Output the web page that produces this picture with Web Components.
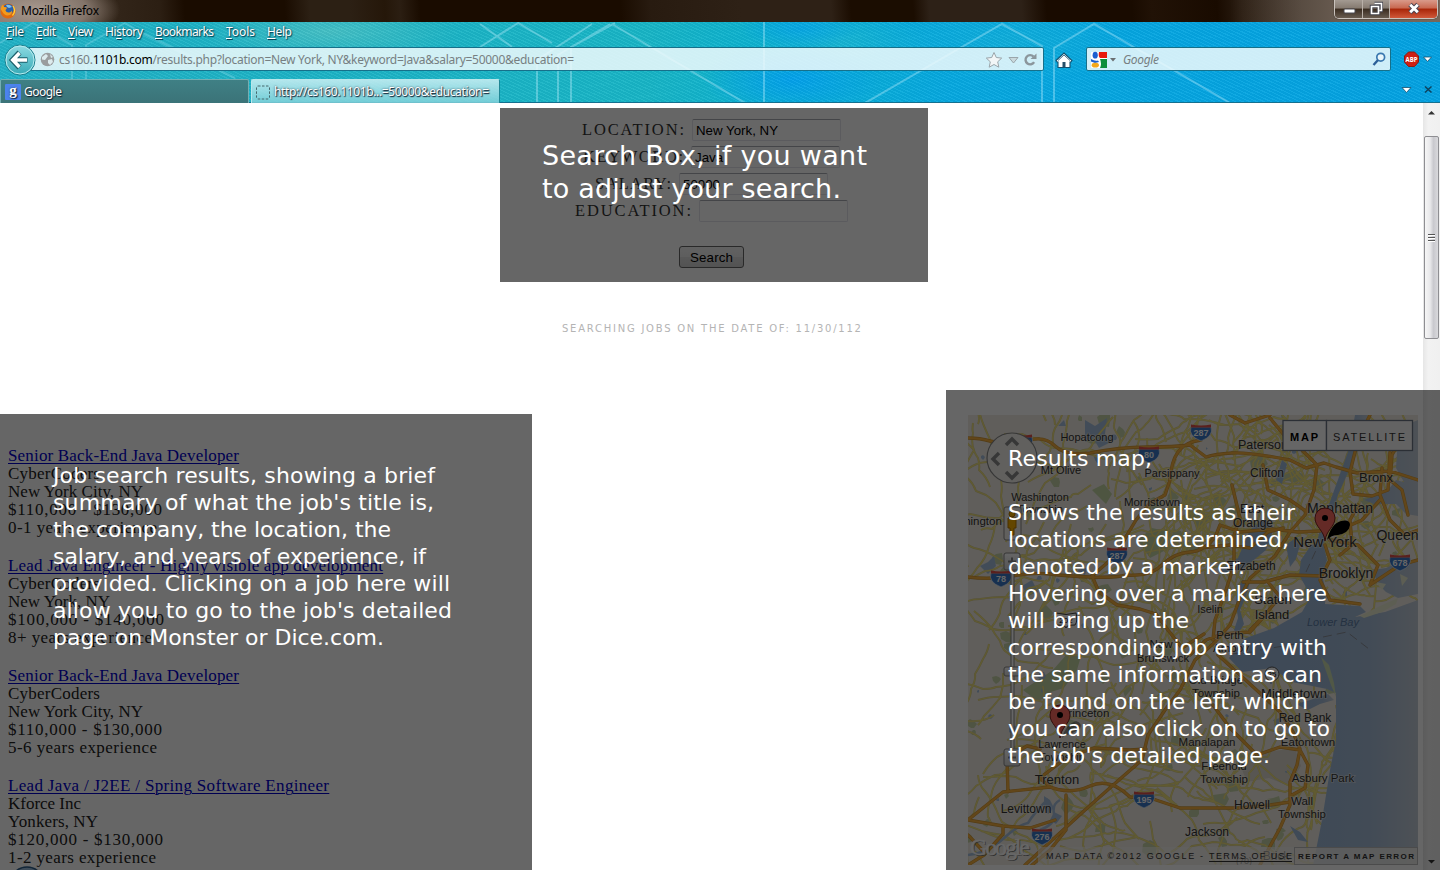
<!DOCTYPE html>
<html lang="en">
<head>
<meta charset="utf-8">
<title>Mozilla Firefox</title>
<style>
html,body{margin:0;height:100%;overflow:hidden;background:#fff}
</style>
</head>
<body>
<browser-window>
  <title-bar slot="title"></title-bar>
  <tool-area slot="tools"></tool-area>
  <results-page slot="page"></results-page>
  <scroll-bar slot="scroll"></scroll-bar>
  <note-callout slot="notes" style="--x:500px;--y:108px;--w:428px;--h:174px;--px:42px;--py:31px;--fs:27px;--lh:33px">
    <fit-text w="325">Search Box, if you want</fit-text>
    <fit-text w="299">to adjust your search.</fit-text>
  </note-callout>
  <note-callout slot="notes" style="--x:0px;--y:414px;--w:532px;--h:456px;--px:53px;--py:48px;--fs:22px;--lh:27px">
    <fit-text w="382">Job search results, showing a brief</fit-text>
    <fit-text w="381">summary of what the job's title is,</fit-text>
    <fit-text w="338">the company, the location, the</fit-text>
    <fit-text w="373">salary, and years of experience, if</fit-text>
    <fit-text w="397">provided. Clicking on a job here will</fit-text>
    <fit-text w="399">allow you to go to the job's detailed</fit-text>
    <fit-text w="331">page on Monster or Dice.com.</fit-text>
  </note-callout>
  <note-callout slot="notes" style="--x:946px;--y:390px;--w:494px;--h:480px;--px:62px;--py:55px;--fs:22px;--lh:27px">
    <fit-text w="144">Results map,</fit-text>
    <br-line></br-line>
    <fit-text w="287">Shows the results as their</fit-text>
    <fit-text w="281">locations are determined,</fit-text>
    <fit-text w="237">denoted by a marker.</fit-text>
    <fit-text w="319">Hovering over a marker here</fit-text>
    <fit-text w="181">will bring up the</fit-text>
    <fit-text w="319">corresponding job entry with</fit-text>
    <fit-text w="314">the same information as can</fit-text>
    <fit-text w="300">be found on the left, which</fit-text>
    <fit-text w="322">you can also click on to go to</fit-text>
    <fit-text w="262">the job's detailed page.</fit-text>
  </note-callout>
</browser-window>

<script>
const define = (name, html, setup) => customElements.define(name, class extends HTMLElement {
  constructor() {
    super();
    this.attachShadow({mode: 'open'}).innerHTML = html;
    if (setup) setup(this.shadowRoot, this);
  }
});

define('browser-window', `
<style>
:host{display:flex;flex-direction:column;position:relative;width:1440px;height:870px;overflow:hidden;background:#fff}
.body{display:flex;flex:1;min-height:0}
</style>
<slot name="title"></slot><slot name="tools"></slot>
<div class="body"><slot name="page"></slot><slot name="scroll"></slot></div>
<slot name="notes"></slot>`);

define('note-callout', `
<style>
:host{position:absolute;left:var(--x);top:var(--y);width:var(--w);height:var(--h);box-sizing:border-box;
 padding:var(--py) 0 0 var(--px);background:rgba(0,0,0,.6);color:#fff;display:flex;flex-direction:column;align-items:flex-start;
 font:var(--fs)/var(--lh) "DejaVu Sans",Verdana,sans-serif}
</style><slot></slot>`);
define('br-line', `<style>:host{display:block;height:27px;flex:none}</style>`);

define('title-bar', `
<style>
:host{display:flex;height:22px;flex:none;justify-content:space-between;align-items:flex-start;overflow:hidden;
 background:radial-gradient(ellipse 82px 34px at 38px 10px,rgba(190,175,165,.8) 0,rgba(165,150,140,.68) 60%,rgba(120,105,90,0) 100%),
 linear-gradient(90deg,transparent 1230px,rgba(150,135,122,.5) 1340px,rgba(160,140,125,.6) 1440px),
 linear-gradient(86deg,#5a4a3e 0,#33261a 110px,#2c1f13 160px,#1a0c00 185px,#1a0c00 285px,#2c2014 310px,#2c2014 350px,#251709 385px,#2b1e12 400px,#1a0c00 420px,#1a0c00 620px,#281b10 650px,#2e2116 740px,#2e2116 830px,#1b0d01 850px,#1b0d01 912px,#2d2117 928px,#2d2117 1020px,#190b00 1045px,#190b00 1130px,#211206 1150px,#190b00 1215px,#2a1d12 1240px,#3b3027 1300px)}
.t{display:flex;align-items:center;gap:5px;height:22px;font:12px/20px "Noto Sans","Open Sans",sans-serif;color:#000}
svg{flex:none}
.b{display:flex;width:104px;height:19px;margin:0 2px 0 0;box-sizing:border-box;border:1px solid #c9c2bc;border-top:0;border-radius:0 0 5px 5px;overflow:hidden;box-shadow:0 0 1px #000}
.b div{display:flex;align-items:center;justify-content:center;background:linear-gradient(#a39a92,#857a70 45%,#3a2c20 50%,#695c50);border-right:1px solid #b9b0a8;width:28px;box-sizing:border-box}
.b div:nth-of-type(2){width:27px}
.b div:last-child{flex:1;border:0;background:linear-gradient(#d99a8a,#c8674f 45%,#a82508 50%,#d0583a)}
</style>
<div class="t"><svg width="16" height="18" viewBox="0 0 16 18"><circle cx="8" cy="9" r="7.600" fill="#e06a10"/><circle cx="8.300" cy="7.300" r="5.400" fill="#2b5fa8"/><path d="M6 3q4-1 6 2l-3 1-2-1z" fill="#7fc0ea"/><path d="M.6 7Q1.500 3.600 3 2.600L4 5q2-.4 3 1L5.400 8.300q1 2.700 4 2.200 2-.5 2.500-2 .6 3-2 4.500Q5 14.500 2.500 10z" fill="#f39a1c"/><path d="M13 4q3.400 5-.5 9.500" fill="none" stroke="#ffd23c" stroke-width="1.300"/></svg><fit-text w="78">Mozilla Firefox</fit-text></div>
<div class="b"><div><svg width="14" height="16"><rect x="2" y="8" width="11" height="4" rx="1" fill="#fff" stroke="#4a4a52"/></svg></div>
<div><svg width="14" height="16"><path d="M5.500 2.500h7v7h-2M2.500 5.500h7v7h-7z" fill="none" stroke="#44444c" stroke-width="3.500"/><path d="M5.500 2.500h7v7h-2M2.500 5.500h7v7h-7z" fill="none" stroke="#fff" stroke-width="1.600"/></svg></div>
<div><svg width="16" height="16"><path d="M4 3.500l8 8M12 3.500l-8 8" stroke="#4c4450" stroke-width="4.800"/><path d="M4.200 3.700l7.600 7.600M11.800 3.700l-7.600 7.600" stroke="#fff" stroke-width="2.800"/></svg></div></div>`);

define('tool-area', `
<style>
:host{display:flex;flex-direction:column;height:81px;flex:none;box-sizing:border-box;position:relative;border-bottom:1px solid #14708f;
 background:repeating-linear-gradient(25deg,rgba(255,255,255,.05) 0 1px,rgba(0,40,80,.05) 1px 3px),
 radial-gradient(ellipse 90px 36px at 793px 58px,rgba(0,155,245,.7),transparent),
 radial-gradient(ellipse 60px 22px at 800px 6px,rgba(0,160,240,.6),transparent),
 radial-gradient(ellipse 130px 30px at 330px 10px,rgba(110,205,195,.5),transparent),
 radial-gradient(ellipse 90px 30px at 840px 20px,rgba(40,190,205,.45),transparent),
 radial-gradient(ellipse 120px 40px at 1010px 20px,rgba(40,190,205,.3),transparent),
 linear-gradient(90deg,#22b3c6 0,#18b6c6 45%,#0bb2d2 54%,#06a9e0 66%,#04a3e3 100%);
 font:12px/20px "Noto Sans","Open Sans",sans-serif}
.bg{position:absolute;left:0;top:0}
menu-row,nav-row,tab-row{position:relative}
</style>
<svg class="bg" width="1440" height="80" viewBox="0 22 1440 80" fill="none" stroke="#c4f2ff" stroke-width="2">
<path stroke-opacity=".22" d="M0 43L33 23l39 22v58M86 103V45l39-22 15 9 95 46"/><path stroke-opacity=".36" d="M480 24l32 23M480 47l38-24 34 20M537 103V60l55-36M558 103V55l52-31M571 103V47l44-24M612 24l133 79M764 22v81M865 103l95-55 42-24 40 22v57M1054 103V48l40-24 136 79"/></svg>
<menu-row></menu-row><nav-row></nav-row><tab-row></tab-row>`);

define('menu-row', `
<style>
:host{display:flex;height:20px;flex:none;padding-left:6px;color:#fff;text-shadow:1px 1px 1px #045,0 0 2px #256}
span{flex:none;width:var(--w)}
u{text-underline-offset:2px}
</style>
<span style="--w:30px"><fit-text w="18"><u>F</u>ile</fit-text></span><span style="--w:32px"><fit-text w="20"><u>E</u>dit</fit-text></span><span style="--w:37px"><fit-text w="25"><u>V</u>iew</fit-text></span><span style="--w:50px"><fit-text w="38">Hi<u>s</u>tory</fit-text></span><span style="--w:71px"><fit-text w="59"><u>B</u>ookmarks</fit-text></span><span style="--w:41px"><fit-text w="29"><u>T</u>ools</fit-text></span><span style="--w:30px"><fit-text w="25"><u>H</u>elp</fit-text></span>`);

define('nav-row', `
<style>
:host{display:flex;height:35px;flex:none;align-items:center;padding-left:4px;box-sizing:border-box}
.back{z-index:1;flex:none;margin-right:-26px}
.f{display:flex;flex:none;align-items:center;height:24px;box-sizing:border-box;border:1px solid #16708a;border-radius:2px;background:rgba(240,250,253,.86);color:#777f82;margin-bottom:1px;padding-top:1px}
.f svg{flex:none}
.u{width:1030px;padding-left:25px;margin-left:4px;gap:4px}
b{font-weight:400;color:#000}
.ic{margin-left:auto;margin-right:4px}
.home{flex:none;margin:0 13px 0 11px}
.s{width:305px;padding-left:3px;font-style:italic}
.s .n{margin-left:6px}
.abp{flex:none;margin:0 0 0 12px}
</style>
<svg class="back" width="32" height="32" viewBox="0 0 32 32"><defs><linearGradient id="a" x2="0" y2="1"><stop stop-color="#8fdbe3"/><stop offset="1" stop-color="#35a9b6"/></linearGradient></defs><circle cx="16" cy="16" r="15" fill="url(#a)" stroke="#1d7e8c"/><circle cx="16" cy="16" r="14" fill="none" stroke="#b8ecf0"/><path d="M15.500 8.500l-7 7.500 7 7.500M9 16h14.500" fill="none" stroke="#1b5e6a" stroke-width="5.500"/><path d="M15.500 9L8.800 16l6.700 7M9.500 16h13.500" fill="none" stroke="#fff" stroke-width="3.600"/></svg>
<div class="f u"><svg width="15" height="15" viewBox="0 0 15 15"><circle cx="7.500" cy="7.500" r="6.800" fill="#9a9d9e"/><path d="M2 5l4-3 2 2-3 4-3-.5zM8 8l4-1 1 3-3 3-2-2zM10 2l3 3-2 1z" fill="#dcebed"/></svg>
<fit-text w="515">cs160.<b>1101b.com</b>/results.php?location=New York, NY&amp;keyword=Java&amp;salary=50000&amp;education=</fit-text>
<svg class="ic" width="54" height="18" viewBox="0 0 54 18"><path d="M9 1.500l2.300 5 5.400.6-4 3.700 1.100 5.400L9 13.500l-4.800 2.700 1.100-5.400-4-3.700 5.400-.6z" fill="#f2f6f7" stroke="#9aa5aa"/><path d="M24 6.500h9L28.500 12z" fill="#c9d9dd" stroke="#9aa5aa"/><path d="M48.500 5.600a4.600 4.600 0 1 0 .6 5.500" fill="none" stroke="#8b969c" stroke-width="2.400"/><path d="M45.500 8h6V2.500z" fill="#8b969c"/></svg></div>
<svg class="home" width="18" height="18" viewBox="0 0 18 18"><path d="M1 9.500L9 2l8 7.500-1.200 1.500H15v5.500H3V11h-.8z" fill="#fff" stroke="#14506e" stroke-width="1.100"/><path d="M3 9.500L9 4l6 5.500" fill="none" stroke="#14506e" stroke-width=".8"/><path d="M7.500 16v-5h3v5z" fill="#27506a"/></svg>
<div class="f s"><svg width="18" height="17" viewBox="0 0 18 17"><rect x="1" y="1" width="16" height="16" rx="1" fill="#fff"/><path d="M9 1h8v6H10q-2-2-1-6z" fill="#e8190c"/><path d="M10 8h7v9h-7q2-4 0-9z" fill="#0c8f3c"/><ellipse cx="5.200" cy="4.200" rx="2.600" ry="3.400" fill="#1a5fd0"/><path d="M1 8q4 2.500 7 1.500l1 1.500-4 1-4-1.500z" fill="#1a5fd0"/><ellipse cx="5.300" cy="14.200" rx="3.600" ry="2.400" fill="#f3a81c"/></svg>
<svg width="9" height="6"><path d="M2 1h6L5 4.500z" fill="#6a6f72"/></svg><span class="n"><fit-text w="36">Google</fit-text></span>
<svg style="margin-left:auto;margin-right:4px" width="14" height="15" viewBox="0 0 14 15"><circle cx="8.700" cy="5.200" r="3.900" fill="#e8f6fb" stroke="#3a78b0" stroke-width="1.700"/><path d="M6 8l-4.500 5" stroke="#2d5f98" stroke-width="2.400"/></svg></div>
<svg class="abp" width="30" height="17" viewBox="0 0 30 17"><path d="M5.500 1h6l4 4v6l-4 4.500h-6L1.500 11V5z" fill="#cf1f14" stroke="#8d1a12"/><text x="8.500" y="11" font-family="Open Sans,sans-serif" font-weight="700" font-size="7" textLength="12" lengthAdjust="spacingAndGlyphs" text-anchor="middle" fill="#fff">ABP</text><path d="M20.500 6h8l-4 4.500z" fill="#fff" stroke="#145070" stroke-width=".8"/></svg>`);

define('tab-row', `
<style>
:host{display:flex;height:24px;flex:none;margin-top:2px;align-items:stretch;color:#fff;gap:2px}
div{box-sizing:border-box;display:flex;align-items:center;padding:1px 0 0 5px;border:1px solid #3f7f86;border-bottom:0;border-radius:2px 2px 0 0;line-height:20px;text-shadow:1px 1px 1px #123,0 0 2px #345}
.a{width:249px;padding-left:4px;background:linear-gradient(#3f8085,#3b7378);border-color:#75aeb2;gap:3px}
.b{width:249px;padding-left:4px;background:linear-gradient(rgba(205,240,244,.85),rgba(130,210,218,.82));border-color:#b9e6ea #1f8795 #fff #b9e6ea;gap:4px}
.e{border:0;padding:0;margin-left:auto;margin-right:7px;gap:12px;margin-top:-3px}
</style>
<div class="a"><svg width="16" height="16"><rect width="16" height="16" rx="1" fill="#4b83ee"/><text x="8" y="11" text-anchor="middle" font-family="Liberation Serif,serif" font-weight="700" font-size="15" fill="#fff">g</text></svg><fit-text w="38">Google</fit-text></div>
<div class="b"><svg width="14" height="15"><rect x=".5" y="1" width="13" height="13" rx="1.500" fill="none" stroke="#46686c" stroke-dasharray="2.500 1.500"/></svg><fit-text w="215">http://cs160.1101b...=50000&amp;education=</fit-text></div>
<div class="e"><svg width="11" height="8"><path d="M1 1.500h9L5.500 6.500z" fill="#fff" stroke="#145070" stroke-width=".8"/></svg><svg width="9" height="9"><path d="M1 1.500l6.500 6M7.500 1.500l-6.500 6" stroke="#0e4460" stroke-width="1.600"/></svg></div>`);

define('results-page', `
<style>
:host{display:flex;flex-direction:column;width:1423px;height:767px;overflow:hidden;background:#fff}
p{margin:0;height:12px;display:flex;justify-content:center;padding:51px 0 80px;font:10px/12px "DejaVu Sans",Verdana,sans-serif;color:#b4b4b4}
search-form{height:169px}
.r{display:flex;justify-content:space-between;padding:0 5px 0 8px}
</style>
<search-form></search-form>
<p><fit-text w="299">SEARCHING JOBS ON THE DATE OF: 11/30/112</fit-text></p>
<div class="r"><job-list></job-list><results-map></results-map></div>`);

define('search-form', `
<style>
:host{display:flex;flex-direction:column;align-items:center;flex:none;padding-top:16px;box-sizing:border-box;font:16.500px/22px "Liberation Serif",Georgia,serif;color:#333}
.r{display:flex;height:22px;margin-bottom:5px;color:#333}
.r span{display:block;width:var(--l);white-space:nowrap}
.r div{width:149px;height:22px;box-sizing:border-box;border:1px solid #e3e3ec;border-top-color:#abadb3;border-radius:2px;padding-left:3px;font:13.300px/21px "Liberation Sans",Arial,sans-serif;color:#000}
button{margin-top:19px;width:65px;height:22px;box-sizing:border-box;border:1px solid #666;border-radius:3px;background:linear-gradient(#f2f2f2,#ebebeb 49%,#ddd 50%,#cfcfcf);font:13.300px/20px "Liberation Sans",Arial,sans-serif;padding:1px 0 0;color:#000}
</style>
<div class="r"><span style="--l:110px"><fit-text w="102">LOCATION:</fit-text></span><div>New York, NY</div></div>
<div class="r"><span style="--l:108px"><fit-text w="100">KEYWORD:</fit-text></span><div>Java</div></div>
<div class="r"><span style="--l:84px"><fit-text w="76">SALARY:</fit-text></span><div>50000</div></div>
<div class="r"><span style="--l:124px"><fit-text w="116">EDUCATION:</fit-text></span><div></div></div>
<button><fit-text w="43">Search</fit-text></button>`);

define('job-list', `
<style>
:host{display:block;padding-top:32px;font:17px/18px "Liberation Serif",Georgia,serif;color:#222}
ul{list-style:none;margin:0 0 20px;padding:0}
li{height:18px;white-space:nowrap}
li:first-child{color:#00c}
li:first-child fit-text{text-decoration:underline;text-decoration-thickness:1px;text-underline-offset:2px}
svg{display:block;margin:-21px 0 0 2px}
</style><main></main><svg width="36" height="36"><circle cx="17" cy="18" r="17" fill="#9fc0e0" stroke="#30608c" stroke-width="1.500"/></svg>`, root => {
  const jobs = [
    [['Senior Back-End Java Developer',231],['CyberCoders',92],['New York City, NY',135],['$110,000 - $130,000',154],['0-1 years experience',149]],
    [['Lead Java Engineer - Highly visible app development',375],['CyberCoders',92],['New York, NY',102],['$100,000 - $140,000',156],['8+ years experience',144]],
    [['Senior Back-End Java Developer',231],['CyberCoders',92],['New York City, NY',135],['$110,000 - $130,000',154],['5-6 years experience',149]],
    [['Lead Java / J2EE / Spring Software Engineer',321],['Kforce Inc',73],['Yonkers, NY',90],['$120,000 - $130,000',155],['1-2 years experience',148]]];
  root.querySelector('main').innerHTML = jobs.map(j => '<ul>' + j.map(([t, w]) => `<li><fit-text w="${w}">${t}</fit-text></li>`).join('') + '</ul>').join('');
});

define('results-map', `
<style>
:host{display:block;width:450px;height:450px;flex:none}
svg{display:block}
text{font-family:"Liberation Sans",Arial,sans-serif}
</style>
<svg width="450" height="450" viewBox="968 415 450 450">
<defs><linearGradient id="sea"><stop stop-color="#9cb8da"/><stop offset=".55" stop-color="#a0bad8"/><stop offset=".75" stop-color="#a6bcd6"/><stop offset="1" stop-color="#c2ccd8"/></linearGradient>
<linearGradient id="ctl" x2="0" y2="1"><stop stop-color="#fff"/><stop offset="1" stop-color="#d4d4d4"/></linearGradient>
<g id="pin"><path d="M1325 541c-1-11-10-14-10-23a10 10 0 0 1 20 0c0 9-9 12-10 23z" fill="#fa6a60" stroke="#7c201c"/><circle cx="1325" cy="518" r="3" fill="#000"/></g></defs>
<rect x="968" y="415" width="450" height="450" fill="#f1ece3"/>
<g id="green" fill="#c6d3a8"></g>
<g fill="#c2d4a4"><path d="M1023 690l30-20 14-16 14 2-4 14-13 18-20 6-8 6zM1092 490l12-6 8 10-6 10zM1138 540l14-12 18 4-4 18-16 8z"/></g>
<path d="M1240 765l20-12 35-5 6 18-12 20-20-8-22 4z" fill="#ddd8cd"/>
<g id="lakes" fill="#a5bfdd"></g>
<g id="minor" fill="none" stroke-linejoin="round"></g>
<g fill="url(#sea)">
<path d="M1355 415h13l-10 35-20 45-8 30-6 18-8 2 6-22 9-24 18-50z"/>
<path d="M1311 545l12-3 4 18-5 15 4 17-1 12 35 2 6 6-11 5 30-5 33-12v265h-105l9-45 8-50 6-30v-47l-9-4-5-1-30-6-20-14-30 4-13-14 17-20 28-10 28-16 9-16-12-21 2-15z"/>
<path d="M1372 570l14-2 12-6 20-2v34l-20 4-12-6-8-8zM1388 490l8-10 22 6v30l-12-2-10-10-22 0-10-4zM1398 436l10-12 10-4v70l-14-8-8-14zM1250 530l14-12 10 10-8 22-22 18-20 6-6-4 20-12zM1286 545l8-6 6 6-4 14-6 8zM1238 590l4-10 8 2-4 14-6 14 4 14-6 10-4-4 4-12-2-14zM1276 480l6-20 5 4-5 20z"/>
<path d="M1296 704l14-4 18-6 6 6-14 4-12 6zM1290 826l10 6 8 10-10-2z"/></g>
<path d="M1321 657l8 8 5 18 2 14-5-12z" fill="#cbdcae"/>
<path d="M1360 616l20-10 18-8-2 6-14 8-18 6zM1376 582l10 2-4 6zM1400 574l8 4-6 8z" fill="#e8ecd0"/>
<path d="M968 855q20-2 35-16t25-16q6-10 20-24M1060 800q-8 4-6 14t-14 16" fill="none" stroke="#a5bfdd" stroke-width="2.500"/>
<g id="roads" fill="none" stroke-linecap="round" stroke-linejoin="round"></g>
<path d="M1230 654l22-2M1260 650l35-6M1323 637l24-5 22 17M1306 572l12-26" fill="none" stroke="#8a8f98" stroke-dasharray="9 5"/>
<g id="shields"></g><g id="labels"></g>
<g><path d="M1327 540q4-16 14-19 9-2 9 4-1 8-12 10-7 0-11 5z" fill="#000"/><path d="M1062 738q4-14 14-17 7 2 4 8-8 5-16 7z" fill="#333" opacity=".5"/>
<use href="#pin"/><use href="#pin" x="-265" y="197"/></g>
<g stroke="#888"><circle cx="1012" cy="458" r="25" fill="#f2f0ec" stroke-width="1.200"/>
<path d="M1006 445l6-6 6 6M1006 472l6 6 6-6M999 453l-6 6 6 6" fill="none" stroke="#8b8b8b" stroke-width="3.500"/>
<rect x="1004" y="507" width="17" height="33" rx="2" fill="#f2f0ec"/><path d="M1008 518h8v10h-2v7h-4v-7h-2z" fill="#f7b000" stroke="#b67900"/><circle cx="1012" cy="514" r="3" fill="#f7b000" stroke="#b67900"/>
<rect x="1011" y="569" width="3" height="182" fill="#fff"/><g fill="url(#ctl)"><rect x="1004" y="553" width="16" height="17" rx="2"/><rect x="1004" y="749" width="16" height="17" rx="2"/><rect x="1004" y="667" width="16" height="9" rx="2"/></g><path d="M1008 561.500h8M1012 557.500v8M1008 757.500h8" stroke="#888" stroke-width="2"/></g>
<text x="971" y="856" style="font-family:'Liberation Serif',serif" font-size="24" textLength="60" fill="#777">Google</text>
<text x="970" y="855" style="font-family:'Liberation Serif',serif" font-size="24" textLength="60" fill="#fff" stroke="#fff" stroke-width=".5" aria-hidden="true">Google</text>
<rect x="1038" y="847" width="256" height="18" fill="#f5f3ee" opacity=".6"/>
<g fill="#333" font-size="9"><text x="1046" y="859" textLength="157">MAP DATA ©2012 GOOGLE -</text><text x="1209" y="859" textLength="83">TERMS OF USE</text></g><path d="M1209 861.500h83" stroke="#333"/>
<rect x="1294.500" y="847.500" width="123" height="17" fill="#f5f3ee" fill-opacity=".8" stroke="#bbb"/><text x="1298" y="859" font-size="8" font-weight="700" textLength="116" fill="#333">REPORT A MAP ERROR</text>
<g stroke="#6d7685" stroke-width="1.300" fill="#fff"><rect x="1283" y="420.500" width="43.500" height="30"/><rect x="1326.500" y="420.500" width="86" height="30" fill="#f8f8f8"/></g>
<text x="1290" y="441" font-size="11" font-weight="700" textLength="28">MAP</text><text x="1333" y="441" font-size="11" textLength="72" fill="#333">SATELLITE</text>
</svg>`, root => {
  let s = 71;
  const rnd = () => (s = (s * 16807) % 2147483647) / 2147483647;
  const $ = id => root.getElementById(id);
  let minor = '';
  for (let i = 0; i < 350; i++) {
    let x, y;
    if (i < 210) { x = 968 + rnd() * 370; y = 415 + rnd() * 450; } else { x = 1170 + rnd() * 240; y = 415 + rnd() * 190; }
    let a = rnd() * 6.28, d = `M${x | 0} ${y | 0}`;
    const n = 3 + rnd() * 5;
    for (let k = 0; k < n; k++) {
      a += (rnd() - .5) * 1.1;
      const l = 8 + rnd() * 17, px = x, py = y;
      x += Math.cos(a) * l; y += Math.sin(a) * l;
      d += `Q${(px + x) / 2 + rnd() * 6 - 3 | 0} ${(py + y) / 2 + rnd() * 6 - 3 | 0} ${x | 0} ${y | 0}`;
    }
    minor += d;
  }
  $('minor').innerHTML = `<path d="${minor}" stroke="#d6cb94" stroke-width="2"/><path d="${minor}" stroke="#f2e47a" stroke-width="1.200"/>`;
  const blob = (n, r) => {
    let o = '';
    for (let i = 0; i < n; i++) {
      const x = 968 + rnd() * 440, y = 415 + rnd() * 440, q = r * (.4 + rnd());
      o += 'M' + [0, 1, 2, 3, 4, 5, 6].map(k => { const t = k * .9, v = q * (.5 + rnd() * .8); return (x + Math.cos(t) * v | 0) + ' ' + (y + Math.sin(t) * v | 0); }).join('L') + 'z';
    }
    return `<path d="${o}"/>`;
  };
  $('green').innerHTML = blob(95, 7);
  $('lakes').innerHTML = blob(45, 3) + '<path d="M1085 420l10 6 12-8-2 16 6 8-12 6-6-10-8 4zM980 566l8-4 6-6 2 10-8 8zM1022 586l10-6 6 12-10 4zM1058 426l6-6 2 6zM1044 796l6 4 4 8-6 6-4-6zM1054 812l8 4-6 8-6-4z"/>';
  const roads = [
    'M968 438Q980 438 990 441T1030 440Q1045 436 1055 446T1090 453Q1120 447 1147 447T1190 445L1206 457Q1215 454 1232 453T1290 460L1306 468 1324 463 1336 467 1357 473 1390 471 1418 480',
    'M1201 440Q1185 442 1178 452T1170 480L1165 495 1150 503 1136 520 1127 535 1118 552 1107 563 1092 576 1099 592 1117 605 1140 609 1156 614 1168 630 1182 648',
    'M968 577Q990 580 1012 576T1050 574 1090 577 1127 575Q1150 577 1162 565T1190 552 1216 535L1220 525 1240 532 1272 529 1298 532 1320 531',
    'M1200 548L1230 545 1250 548 1268 532 1283 528M1270 418L1284 435 1302 450 1317 465 1314 490 1305 515 1290 532 1275 556 1250 578 1240 598 1230 625 1215 642 1195 660 1180 690 1165 710 1148 735 1142 760 1120 779 1085 810 1050 842 1025 865',
    'M1263 465L1268 490 1290 500 1307 512M1232 485L1240 518 1234 535 1234 565 1226 590 1215 620 1213 640M1382 468L1380 495 1390 520 1405 535 1418 530M1390 452L1388 490 1372 496 1353 494 1350 472 1358 440 1370 415M1325 545L1330 560 1320 580 1330 600 1360 604M1330 540L1358 545 1378 565 1370 585 1400 565 1418 560M1340 530L1362 520 1380 500M1243 582L1264 582 1290 575 1322 576M1268 582L1280 597 1262 618 1250 630',
    'M968 820L1003 792 1050 787Q1070 795 1090 786T1130 797L1153 799 1180 808 1240 808 1270 805 1290 802',
    'M1008 792L1007 758 1027 746 1040 749M1050 787L1040 778 1066 758 1094 748 1130 750 1146 749M1066 795L1066 830 1050 850 1032 865M968 820L1003 826 1030 828 1055 820M1003 826L1003 834 984 855 968 865M968 835L984 852',
    'M1218 655L1240 675 1262 695 1280 712 1293 732 1300 749 1297 765 1290 782 1290 805 1280 828 1268 850 1260 865M1213 705L1230 728 1257 755 1280 747 1300 750 1308 765 1305 788 1290 796',
    'M1230 415L1245 423 1270 415M1340 555L1352 545 1350 520 1358 505M1400 440L1392 455 1390 480 1402 490 1408 515M1190 655L1206 640 1222 634 1250 632 1268 612M1182 648L1204 634'
  ].join('');
  $('roads').innerHTML = `<path d="${roads}" stroke="#cf9638" stroke-width="3.400"/><path d="${roads}" stroke="#f5b040" stroke-width="2.200"/>`;
  $('shields').innerHTML = [[1201,432,'287'],[1149,454,'80'],[1117,555,'287'],[1001,578,'78'],[1400,562,'678'],[1144,799,'195'],[1042,836,'276'],[1022,442,'']].map(([x, y, t]) =>
    `<path d="M${x-10} ${y-5}h20q3 9-10 14-13-5-10-14z" fill="#3a78c8" stroke="#fff" stroke-width=".6"/><path d="M${x-10} ${y-7.5}q10 2 20 0v3h-20z" fill="#e0504a"/><text x="${x}" y="${y+4}" font-size="9" font-weight="700" text-anchor="middle" fill="#fff">${t}</text>`).join('') +
    '<circle cx="1272" cy="674" r="7" fill="#fff" stroke="#555"/><text x="1272" y="677" font-size="8" text-anchor="middle">35</text><path d="M1056 613q10 3 20 0 2 8-1 12-9 0-9 3 0-3-9-3-3-4-1-12z" fill="#fff" stroke="#444"/><text x="1066" y="623" font-size="8" text-anchor="middle">202</text>';
  const L = `Hopatcong 1087 441 11|Mt Olive 1061 474 11|Washington 1040 501 11|Township 1040 513 11|hington 983 525 11.500|Parsippany 1172 477 11|Morristown 1152 506 11.500|Paterson 1263 449 12.500|Clifton 1267 477 12|Bronx 1376 482 13|Manhattan 1340 513 14|East 1252 513 12|Orange 1253 527 12|New York 1325 547 15|Queens 1401 540 14|Brooklyn 1346 578 14|Elizabeth 1251 570 12|Staten 1273 604 13|Island 1272 619 13|Iselin 1210 613 11|Perth 1230 639 11.500|Amboy 1231 652 11.500|New 1161 648 11.500|Brunswick 1163 662 11.500|Old Bridge 1216 684 11.500|Township 1216 697 11.500|Middletown 1294 698 13|Red Bank 1305 722 12|Eatontown 1308 746 11.500|Manalapan 1207 746 11.500|Freehold 1224 770 11.500|Township 1224 783 11.500|Asbury Park 1323 782 11.500|Wall 1302 805 11.500|Township 1302 818 11.500|Howell 1252 809 12|Jackson 1207 836 12|Princeton 1085 717 11.500|Lawrence 1062 748 11|Township 1062 761 11|Trenton 1057 784 13|Levittown 1026 813 12|Brick 1276 860 12|(70) 1244 864 9`;
  $('labels').innerHTML = L.split('|').map(r => {
    const m = r.match(/^(.*) (\S+) (\S+) (\S+)$/);
    return `<text x="${m[2]}" y="${m[3]}" font-size="${m[4]}" text-anchor="middle" fill="#333" stroke="#f6f2ea" stroke-width="1.600" stroke-opacity=".55" paint-order="stroke">${m[1]}</text>`;
  }).join('') + '<text x="1333" y="626" font-size="11" font-style="italic" text-anchor="middle" fill="#5b7ba3">Lower Bay</text>';
});

define('scroll-bar', `
<style>
:host{display:flex;flex-direction:column;align-items:center;width:17px;height:767px;background:linear-gradient(90deg,#e6e6e6,#f2f2f2 30%,#f0f0f0)}
.t{width:15px;height:203px;margin-top:20px;box-sizing:border-box;border:1px solid #8e8e92;border-radius:2px;background:linear-gradient(90deg,#f6f6f6,#e8e8ea 40%,#c9c9ce 65%,#d9d9dc);display:flex;align-items:center;justify-content:center}
.d{margin-top:auto;margin-bottom:5px}
svg{display:block;flex:none}
</style><svg style="margin-top:6px" width="7" height="7"><path d="M0 5.500h7L3.500 2z" fill="#333"/></svg><div class="t"><svg width="7" height="9"><path d="M0 1.500h7M0 4.500h7M0 7.500h7" stroke="#555"/><path d="M0 2.500h7M0 5.500h7M0 8.500h7" stroke="#fff"/></svg></div><svg class="d" width="7" height="6"><path d="M0 1h7L3.500 4.500z" fill="#333"/></svg>`);

/* Tracks a single line of text out to the width given in its "w" attribute. Defined last, once inherited fonts are settled. */
customElements.define('fit-text', class extends HTMLElement {
  connectedCallback() {
    if (this.shadowRoot) return;
    this.attachShadow({mode: 'open'}).innerHTML = '<style>:host{display:inline-block;white-space:nowrap;flex:none}</style><slot></slot>';
    const w = +this.getAttribute('w'), n = this.textContent.length - 1;
    const ls = (w - this.getBoundingClientRect().width) / n;
    this.style.letterSpacing = ls + 'px';
    this.style.marginRight = -ls + 'px';
  }
});
</script>
</body>
</html>
